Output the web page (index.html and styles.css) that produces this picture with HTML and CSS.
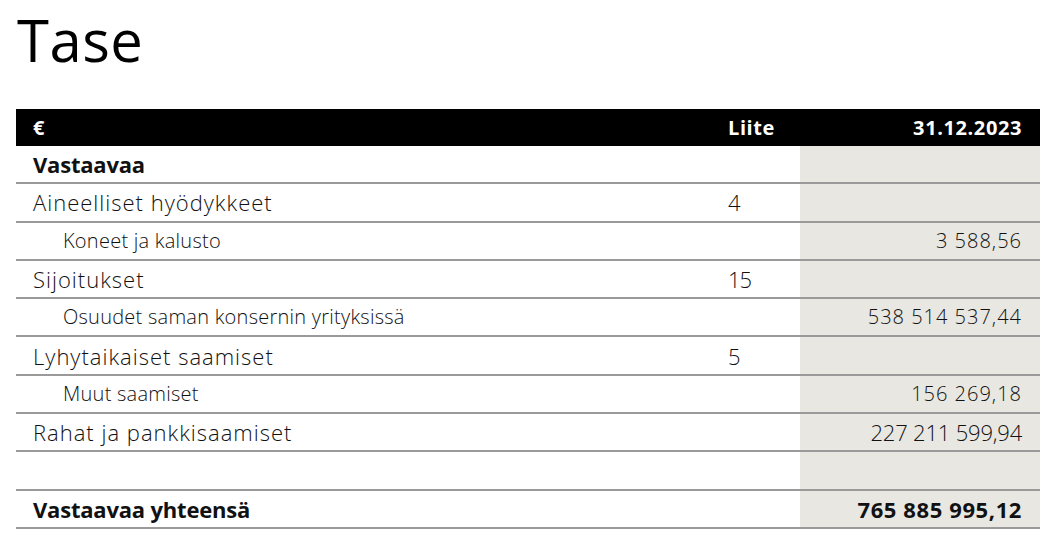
FILE: index.html
```html
<!DOCTYPE html>
<html lang="fi">
<head>
<meta charset="utf-8">
<title>Tase</title>
<link rel="stylesheet" href="styles.css">
</head>
<body>
<main class="page">
  <h1 class="title">Tase</h1>
  <table class="balance">
    <thead>
      <tr>
        <th class="c-label">€</th>
        <th class="c-note">Liite</th>
        <th class="c-value">31.12.2023</th>
      </tr>
    </thead>
    <tbody>
      <tr class="r-head"><td class="c-label">Vastaavaa</td><td class="c-note"></td><td class="c-value"></td></tr>
      <tr><td class="c-label">Aineelliset hyödykkeet</td><td class="c-note">4</td><td class="c-value"></td></tr>
      <tr class="r-sub"><td class="c-label">Koneet ja kalusto</td><td class="c-note"></td><td class="c-value">3 588,56</td></tr>
      <tr><td class="c-label">Sijoitukset</td><td class="c-note">15</td><td class="c-value"></td></tr>
      <tr class="r-sub"><td class="c-label">Osuudet saman konsernin yrityksissä</td><td class="c-note"></td><td class="c-value">538 514 537,44</td></tr>
      <tr><td class="c-label">Lyhytaikaiset saamiset</td><td class="c-note">5</td><td class="c-value"></td></tr>
      <tr class="r-sub"><td class="c-label">Muut saamiset</td><td class="c-note"></td><td class="c-value">156 269,18</td></tr>
      <tr><td class="c-label">Rahat ja pankkisaamiset</td><td class="c-note"></td><td class="c-value">227 211 599,94</td></tr>
      <tr><td class="c-label">&nbsp;</td><td class="c-note"></td><td class="c-value"></td></tr>
      <tr class="r-total"><td class="c-label">Vastaavaa yhteensä</td><td class="c-note"></td><td class="c-value">765 885 995,12</td></tr>
    </tbody>
  </table>
</main>
</body>
</html>
```

FILE: styles.css
```css
html, body {
  margin: 0;
  padding: 0;
  background: #ffffff;
}

.page {
  padding: 0 4px 0 16px;
  font-family: "Open Sans", "Liberation Sans", sans-serif;
  color: #111111;
}

.title {
  margin: 0;
  padding: 0 0 0 1px;
  height: 109px;
  box-sizing: border-box;
  font-family: "Open Sans", sans-serif;
  font-weight: 400;
  font-size: 58px;
  line-height: 80px;
  color: #000000;
  letter-spacing: 0.5px;
}

.balance {
  width: 1024px;
  border-collapse: collapse;
  table-layout: fixed;
}

.balance th {
  background: #000000;
  color: #ffffff;
  font-weight: 700;
  font-size: 20px;
  letter-spacing: 0.6px;
  height: 37px;
  padding: 0;
  vertical-align: middle;
}

.balance td {
  height: 36.3px;
  padding: 0;
  border-bottom: 2px solid #9a9a9a;
  font-size: 22px;
  font-weight: 300;
  line-height: 26px;
  vertical-align: middle;
  letter-spacing: 1px;
}

.balance td.c-note {
  letter-spacing: -1px;
}

.balance td.c-value {
  letter-spacing: -0.2px;
}

.c-label {
  text-align: left;
  padding-left: 17px !important;
}

.c-note {
  width: 72px;
  text-align: left;
}

.c-value {
  width: 222px;
  text-align: right;
  padding-right: 18px !important;
}

.balance td.c-value {
  background: #e8e7e2;
}

.balance .r-head td,
.balance .r-total td {
  font-weight: 700;
  letter-spacing: -0.2px;
}

.balance .r-total td.c-value {
  letter-spacing: 0.6px;
}

.balance .r-sub td {
  font-size: 20px;
  letter-spacing: 0.25px;
}

.balance .r-sub td.c-value {
  letter-spacing: 1px;
}

.r-sub td.c-label {
  padding-left: 47px !important;
}
```
